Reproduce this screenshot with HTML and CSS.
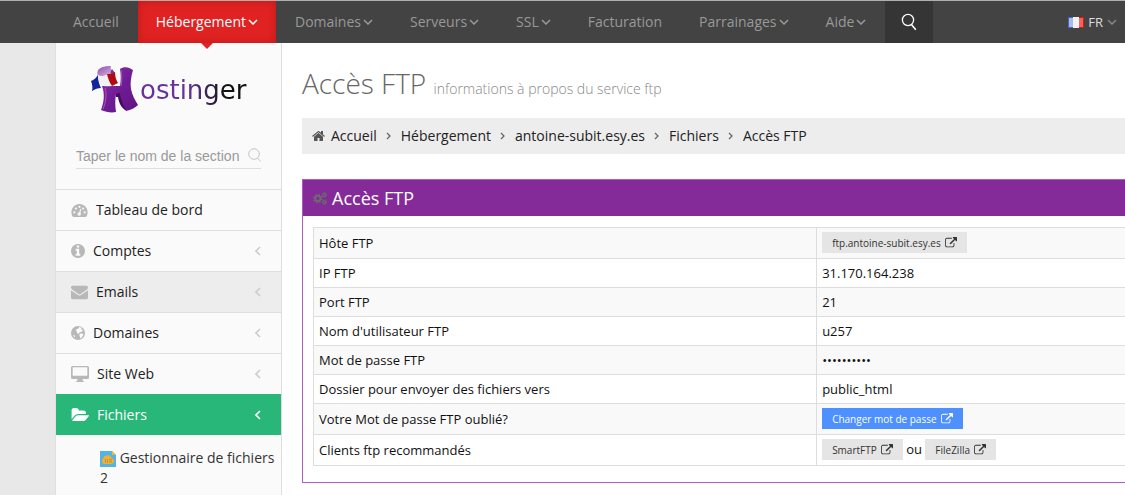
FILE: index.html
```html
<!DOCTYPE html>
<html lang="fr">
<head>
  <meta charset="UTF-8">
  <meta name="viewport" content="width=device-width, initial-scale=1.0">
  <title>Accès FTP</title>
  <link rel="stylesheet" href="styles.css">
</head>
<body>
  <!-- shared icons -->
  <svg class="sprite" aria-hidden="true">
    <symbol id="down" viewBox="0 0 10 6"><path d="M1 1l4 4 4-4" fill="none" stroke="currentColor" stroke-width="1.5"/></symbol>
    <symbol id="left" viewBox="0 0 6 10"><path d="M5 1L1 5l4 4" fill="none" stroke="currentColor" stroke-width="1.6"/></symbol>
    <symbol id="right" viewBox="0 0 6 8"><path d="M1 1l3 3-3 3" fill="none" stroke="currentColor" stroke-width="1.3"/></symbol>
    <symbol id="search" viewBox="0 0 16 18"><circle cx="7" cy="7" r="5.6" fill="none" stroke="currentColor" stroke-width="1.3"/><path d="M10.4 11.4l4.4 5.4" stroke="currentColor" stroke-width="1.6"/></symbol>
    <symbol id="external" viewBox="0 0 1792 1792"><path fill="currentColor" d="M1408 928v320q0 119-84.500 203.500t-203.500 84.500h-832q-119 0-203.500-84.500t-84.500-203.500v-832q0-119 84.500-203.500t203.500-84.500h704q14 0 23 9t9 23v64q0 14-9 23t-23 9h-704q-66 0-113 47t-47 113v832q0 66 47 113t113 47h832q66 0 113-47t47-113v-320q0-14 9-23t23-9h64q14 0 23 9t9 23zm384-864v512q0 26-19 45t-45 19-45-19l-176-176-652 652q-10 10-23 10t-23-10l-114-114q-10-10-10-23t10-23l652-652-176-176q-19-19-19-45t19-45 45-19h512q26 0 45 19t19 45z"/></symbol>
  </svg>

  <header class="header">
    <nav class="navbar">
      <a href="#">Accueil</a>
      <a href="#" class="active">Hébergement <svg class="down"><use href="#down"/></svg></a>
      <a href="#">Domaines <svg class="down"><use href="#down"/></svg></a>
      <a href="#">Serveurs <svg class="down"><use href="#down"/></svg></a>
      <a href="#">SSL <svg class="down"><use href="#down"/></svg></a>
      <a href="#">Facturation</a>
      <a href="#">Parrainages <svg class="down"><use href="#down"/></svg></a>
      <a href="#">Aide <svg class="down"><use href="#down"/></svg></a>
      <button type="button" class="search-btn" aria-label="Rechercher"><svg width="16" height="18"><use href="#search"/></svg></button>
    </nav>
    <a href="#" class="lang">
      <svg width="16" height="11" viewBox="0 0 16 11">
        <path fill="#3f68c5" d="M0 0h5v11H0z"/><path fill="#a9bce9" d="M1 1h4v9H1z"/>
        <path fill="#f1f1f1" d="M5 0h6v11H5z"/>
        <path fill="#d21a10" d="M11 0h5v11h-5z"/><path fill="#f0665c" d="M11 1h4v9h-4z"/>
      </svg>
      <span>FR</span>
      <svg class="down"><use href="#down"/></svg>
    </a>
  </header>

  <div class="page">
    <aside class="sidebar">
      <a href="#" class="logo">
        <svg width="50" height="50" viewBox="0 0 50 50" aria-hidden="true">
          <defs>
            <linearGradient id="purple" x1="0" y1="0" x2="1" y2="1">
              <stop offset="0" stop-color="#8b2fa6"/><stop offset=".5" stop-color="#701c96"/><stop offset="1" stop-color="#5f1382"/>
            </linearGradient>
            <linearGradient id="roll" x1="0" y1="0" x2="1" y2="1">
              <stop offset="0" stop-color="#8d49aa"/><stop offset="1" stop-color="#e3c8ea"/>
            </linearGradient>
          </defs>
          <path fill="url(#purple)" d="M30 4c4-3 9-2 13 1-2 7-3 13-2 19 1 6 4 11 7 16-3 3-7 5-12 6-4-5-6-10-6-17h-4c-1 6-1 12 0 18-5 1-10 0-15-2 3-8 4-16 1-24h18c1-6 1-11 0-17z"/>
          <path fill="#430b5d" d="M26 29l4-1c1 7 3 12 6 17h-1c-4-3-6-7-7-13h-2z"/>
          <path fill="none" stroke="#a65abb" d="M13 44c3-7 4-15 2-21M31 5c1 6 1 11 0 16"/>
          <path fill="url(#roll)" d="M8 11c-1-3-1-5 1-7 4-3 8-3 12-3-1 2 0 5 4 7l-7 4z"/>
          <path fill="#7b2f97" d="M22 4l3 4-4 1c-1-2 0-3 1-5z"/>
          <path fill="#10259b" d="M1 16c3-1 5-3 7-6 0 5 1 9 3 13-3 0-6 1-9 3 1-4 0-7-1-10z"/>
          <path fill="#f3f0f2" d="M8 10c3 2 6 1 10-1 0 4 1 8 4 12-4 0-7 1-11-1-2-3-3-6-3-10z"/>
          <path fill="#b20a14" d="M17 9c3 0 5 0 8-2 0 4 1 8 3 11-2 1-4 2-6 3-3-4-4-8-5-12z"/>
        </svg>
        <span>ostinger</span>
      </a>

      <form class="side-search">
        <input type="text" aria-label="Nom de la section" placeholder="Taper le nom de la section...">
        <button type="button" aria-label="Rechercher"><svg width="13" height="15" viewBox="0 0 13 15"><circle cx="6" cy="6" r="5.300" fill="none" stroke="currentColor"/><path d="M9.500 10l3 3.500" stroke="currentColor"/></svg></button>
      </form>

      <ul class="menu">
        <li><a href="#">
          <svg width="17" height="15" viewBox="0 0 17 15"><path fill="currentColor" d="M8.500 1A8.300 8.300 0 0 0 1.600 13.600q.3.400.8.400h12.200q.500 0 .8-.400A8.300 8.300 0 0 0 8.500 1z"/><g fill="#fafafa"><circle cx="3.300" cy="9.300" r="1.100"/><circle cx="4.900" cy="5.500" r="1.100"/><circle cx="8.500" cy="3.800" r="1.100"/><circle cx="12.100" cy="5.500" r="1.100"/><circle cx="13.700" cy="9.300" r="1.100"/><circle cx="8.200" cy="11" r="1.700"/><path d="M9.300 5.700l.9.200-1 4.700-1.300-.3z"/></g></svg>
          <span>Tableau de bord</span></a></li>
        <li><a href="#">
          <svg width="14" height="14" viewBox="128 128 1536 1536"><path fill="currentColor" d="M1152 1376v-160q0-14-9-23t-23-9h-96v-512q0-14-9-23t-23-9h-320q-14 0-23 9t-9 23v160q0 14 9 23t23 9h96v320h-96q-14 0-23 9t-9 23v160q0 14 9 23t23 9h448q14 0 23-9t9-23zm-128-896v-160q0-14-9-23t-23-9h-192q-14 0-23 9t-9 23v160q0 14 9 23t23 9h192q14 0 23-9t9-23zm640 416q0 209-103 385.500t-279.500 279.500-385.500 103-385.500-103-279.500-279.500-103-385.500 103-385.500 279.500-279.500 385.500-103 385.500 103 279.500 279.500 103 385.500z"/></svg>
          <span>Comptes</span><svg class="arrow"><use href="#left"/></svg></a></li>
        <li class="hover"><a href="#">
          <svg width="17" height="17" viewBox="0 64 1792 1792"><path fill="currentColor" d="M1792 710v794q0 66-47 113t-113 47h-1472q-66 0-113-47t-47-113v-794q44 49 101 87 362 246 497 345 57 42 92.500 65.500t94.500 48 110 24.500h2q51 0 110-24.500t94.500-48 92.500-65.500q170-123 498-345 57-39 100-87zm0-294q0 79-49 151t-122 123q-376 261-468 325-10 7-42.500 31t-54 38.500-52 32.500-57.500 27-50 9h-2q-23 0-50-9t-57.500-27-52-32.500-54-38.500-42.500-31q-91-64-262-182.500t-205-142.500q-62-42-117-115.500t-55-136.500q0-78 41.500-130t118.500-52h1472q65 0 112.500 47t47.500 113z"/></svg>
          <span>Emails</span><svg class="arrow"><use href="#left"/></svg></a></li>
        <li><a href="#">
          <svg width="14" height="14" viewBox="0 0 14 14"><circle cx="7" cy="7" r="7" fill="currentColor"/><path fill="#fafafa" d="M8.300.900l2.200.8-.3 1.200 1.700 1.300-1 1.600-2 .4-1.700 1.700-1.500-1.300.2-1.500-1.300-.4 1.200-1.700 1.700-.5z"/><path fill="#fafafa" d="M9.800 7.500l2.500.3-.4 1.900-1.700 2.300-1.200.3-.2-2.200-.8-1.300zM2.200 8.800l1.400.5.5 2.300-1-.6z"/></svg>
          <span>Domaines</span><svg class="arrow"><use href="#left"/></svg></a></li>
        <li><a href="#">
          <svg width="18" height="16" viewBox="0 0 18 16"><path fill="currentColor" fill-rule="evenodd" d="M1.500 0h15q1.500 0 1.500 1.500v10q0 1.500-1.500 1.500h-5l.5 2q1 0 1 1H5q0-1 1-1l.500-2h-5Q0 13 0 11.500v-10Q0 0 1.500 0zm.2 1.300v8.500h14.600V1.300z"/></svg>
          <span>Site Web</span><svg class="arrow"><use href="#left"/></svg></a></li>
        <li class="open"><a href="#">
          <svg width="18" height="14" viewBox="0 160 1943 1440"><path fill="currentColor" d="M1943 952q0 31-31 66l-336 396q-43 51-120.500 86.500t-143.500 35.500h-1088q-34 0-60.500-13t-26.500-43q0-31 31-66l336-396q43-51 120.500-86.500t143.500-35.500h1088q34 0 60.500 13t26.500 43zm-343-344v160h-832q-94 0-197 47.500t-164 119.500l-337 396-5 6q0-4-.5-12.500t-.5-12.500v-960q0-92 66-158t158-66h320q92 0 158 66t66 158v32h544q92 0 158 66t66 158z"/></svg>
          <span>Fichiers</span><svg class="arrow"><use href="#left"/></svg></a>
          <ul class="submenu">
            <li><a href="#"><svg width="16" height="16" viewBox="0 0 16 16"><path fill="#52b3e4" d="M0 0h12l4 4v12H0z"/><path fill="#f9b233" d="M12 0l4 4h-4z"/><path fill="#f9ae2b" d="M4 13a3 3 0 0 1-.5-5.500A3.300 3.300 0 0 1 7 4.400a3.600 3.600 0 0 1 4.600 2.500A3.200 3.200 0 0 1 12 13z"/><path fill="none" stroke="#8f9f70" d="M5.500 8v3.500M7.500 8.500v3M9 8.500h2.500L9.500 11H12"/></svg> Gestionnaire de fichiers 2</a></li>
          </ul>
        </li>
      </ul>
    </aside>

    <main class="content">
      <h1 class="page-title">Accès FTP <small>informations à propos du service ftp</small></h1>

      <nav class="breadcrumb" aria-label="Fil d'Ariane">
        <svg width="13" height="12" viewBox="64 200 1664 1400"><path fill="#555" d="M1472 992v480q0 26-19 45t-45 19h-384v-384h-256v384h-384q-26 0-45-19t-19-45v-480q0-1 .5-3t.5-3l575-474 575 474q1 2 1 6zm223-69l-62 74q-8 9-21 11h-3q-13 0-21-7l-692-577-692 577q-12 8-24 7-13-2-21-11l-62-74q-8-10-7-23.500t11-21.500l719-599q32-26 76-26t76 26l244 204v-195q0-14 9-23t23-9h192q14 0 23 9t9 23v408l219 182q10 8 11 21.500t-7 23.500z"/></svg>
        <a href="#">Accueil</a>
        <svg class="sep"><use href="#right"/></svg>
        <a href="#">Hébergement</a>
        <svg class="sep"><use href="#right"/></svg>
        <a href="#">antoine-subit.esy.es</a>
        <svg class="sep"><use href="#right"/></svg>
        <a href="#">Fichiers</a>
        <svg class="sep"><use href="#right"/></svg>
        <a href="#">Accès FTP</a>
      </nav>

      <section class="portlet">
        <h2 class="portlet-title">
          <svg width="14" height="13" viewBox="0 0 14 13" fill="none" stroke="currentColor"><circle cx="4.800" cy="6.500" r="2.600" stroke-width="1.800"/><circle cx="4.800" cy="6.500" r="4" stroke-width="1.500" stroke-dasharray="1.570 1.570"/><circle cx="11.400" cy="2.900" r="1.500" stroke-width="1.200"/><circle cx="11.400" cy="2.900" r="2.200" stroke-dasharray=".86 .86"/><circle cx="11.400" cy="10.100" r="1.500" stroke-width="1.200"/><circle cx="11.400" cy="10.100" r="2.200" stroke-dasharray=".86 .86"/></svg>
          Accès FTP
        </h2>
        <div class="portlet-body">
          <table class="table">
            <tbody>
              <tr><th scope="row">Hôte FTP</th><td><a href="#" class="btn">ftp.antoine-subit.esy.es <svg><use href="#external"/></svg></a></td></tr>
              <tr><th scope="row">IP FTP</th><td>31.170.164.238</td></tr>
              <tr><th scope="row">Port FTP</th><td>21</td></tr>
              <tr><th scope="row">Nom d'utilisateur FTP</th><td>u257</td></tr>
              <tr><th scope="row">Mot de passe FTP</th><td>••••••••••</td></tr>
              <tr><th scope="row">Dossier pour envoyer des fichiers vers</th><td>public_html</td></tr>
              <tr><th scope="row">Votre Mot de passe FTP oublié?</th><td><a href="#" class="btn blue">Changer mot de passe <svg><use href="#external"/></svg></a></td></tr>
              <tr><th scope="row">Clients ftp recommandés</th><td><a href="#" class="btn">SmartFTP <svg><use href="#external"/></svg></a> ou <a href="#" class="btn">FileZilla <svg><use href="#external"/></svg></a></td></tr>
            </tbody>
          </table>
        </div>
      </section>
    </main>
  </div>
</body>
</html>
```
FILE: styles.css
```css
* {
  box-sizing: border-box;
}

body {
  margin: 0;
  min-height: 100vh;
  display: flex;
  flex-direction: column;
  font-family: "Open Sans", sans-serif;
  font-size: 14px;
  line-height: 20px;
  color: #222;
  background: #e8e8e8;
}

a {
  color: inherit;
  text-decoration: none;
}

ul {
  margin: 0;
  padding: 0;
  list-style: none;
}

button {
  padding: 0;
  border: none;
  background: none;
  cursor: pointer;
}

svg {
  flex-shrink: 0;
}

.sprite {
  display: none;
}

/* top bar */
.header {
  display: flex;
  justify-content: space-between;
  height: 43px;
  padding: 0 8px 0 55px;
  background: #434343;
  border-top: 1px solid #adb0b0;
}

.navbar {
  display: flex;
  gap: 1px;
}

.navbar a {
  position: relative;
  display: flex;
  align-items: center;
  gap: 2px;
  padding: 0 18px;
  color: #999;
}

.down {
  width: 10px;
  height: 6px;
}

.navbar .active {
  color: #fff;
  font-weight: 500;
  background: #e02222;
  box-shadow: inset 0 0 8px rgba(120, 0, 0, 0.3);
}

.navbar .active::after {
  content: "";
  position: absolute;
  top: 100%;
  left: 50%;
  margin-left: -6px;
  border: 6px solid transparent;
  border-top-color: #e02222;
  border-bottom: none;
}

.search-btn {
  display: flex;
  align-items: center;
  justify-content: center;
  width: 48px;
  color: #fff;
  background: #353535;
}

.lang {
  display: flex;
  align-items: center;
  gap: 4px;
  color: #ddd;
  font-size: 13px;
}

.lang .down {
  color: #888;
}

/* layout */
.page {
  flex: 1;
  display: flex;
  padding-left: 55px;
}

.sidebar {
  flex: 0 0 227px;
  background: #fafafa;
  border: solid #dedede;
  border-width: 0 1px;
}

.content {
  flex: 1;
  min-width: 0;
  padding: 20px 0 12px 20px;
  background: #fff;
}

/* sidebar */
.logo {
  display: flex;
  align-items: center;
  padding: 22px 0 0 34px;
}

.logo span {
  font-family: "DejaVu Sans", sans-serif;
  font-size: 26px;
  line-height: 30px;
  color: transparent;
  background: linear-gradient(90deg, #663399 45%, #111 80%);
  -webkit-background-clip: text;
  background-clip: text;
}

.side-search {
  display: flex;
  align-items: center;
  justify-content: space-between;
  height: 26px;
  margin: 28px 20px 20px;
  border-bottom: 1px solid #dedede;
}

.side-search input {
  width: 164px;
  padding: 0;
  border: none;
  outline: none;
  background: transparent;
  font-family: "Liberation Sans", Arial, sans-serif;
  font-size: 14px;
}

.side-search input::placeholder {
  color: #999;
}

.side-search button {
  display: flex;
  color: #c4c4c4;
}

.menu > li > a {
  display: flex;
  align-items: center;
  gap: 8px;
  height: 41px;
  padding: 0 20px 0 15px;
  border-top: 1px solid #dedede;
  color: #222;
}

.menu > li > a svg {
  color: #b8b8b8;
}

.menu > li > a .arrow {
  width: 6px;
  height: 10px;
  margin-left: auto;
  color: #ccc;
}

.menu > .hover > a {
  background: #ededed;
}

.menu > .open > a {
  color: #fff;
  font-weight: 500;
  background: #28b779;
  border-color: #28b779;
}

.menu > .open > a svg {
  color: #fff;
}

.submenu {
  padding: 13px 4px 8px 44px;
}

.submenu svg {
  vertical-align: -4px;
}

.submenu a {
  color: #333;
}

/* content */
.page-title {
  margin: 0 0 15px;
  font-size: 28px;
  font-weight: 300;
  line-height: 40px;
  color: #666;
}

.page-title {
  margin-bottom: 9px;
}

.page-title small {
  font-size: 14px;
  color: #888;
}

.breadcrumb {
  display: flex;
  align-items: center;
  gap: 6px;
  height: 36px;
  margin-bottom: 25px;
  padding: 0 10px;
  background: #ededed;
}

.breadcrumb .sep {
  width: 6px;
  height: 8px;
  margin: 0 3px;
  color: #666;
}

.portlet {
  border: 1px solid #af5cc1;
  border-width: 1px 0 1px 1px;
}

.portlet-title {
  display: flex;
  align-items: center;
  gap: 5px;
  height: 36px;
  margin: 0;
  padding-left: 10px;
  font-size: 18px;
  font-weight: 400;
  color: #fff;
  background: #852b99;
}

.portlet-title svg {
  color: #6c6c6c;
}

.portlet-body {
  padding: 11px 0 16px 10px;
}

.table {
  width: 100%;
  border-collapse: collapse;
  font-size: 13px;
}

.table th,
.table td {
  padding: 4px 5px;
  border: 1px solid #ddd;
  border-right: none;
  text-align: left;
  font-weight: 400;
  color: #111;
}

.table th {
  width: 62%;
}

.table tr:nth-child(odd) {
  background: #f9f9f9;
}

.btn {
  display: inline-flex;
  align-items: center;
  gap: 4px;
  height: 21px;
  margin-bottom: 1px;
  padding: 0 10px;
  vertical-align: top;
  font-size: 10px;
  color: #333;
  background: #e5e5e5;
}

.btn svg {
  width: 12px;
  height: 12px;
}

.btn.blue {
  color: #fff;
  font-weight: 500;
  background: #4d90fe;
}
```
